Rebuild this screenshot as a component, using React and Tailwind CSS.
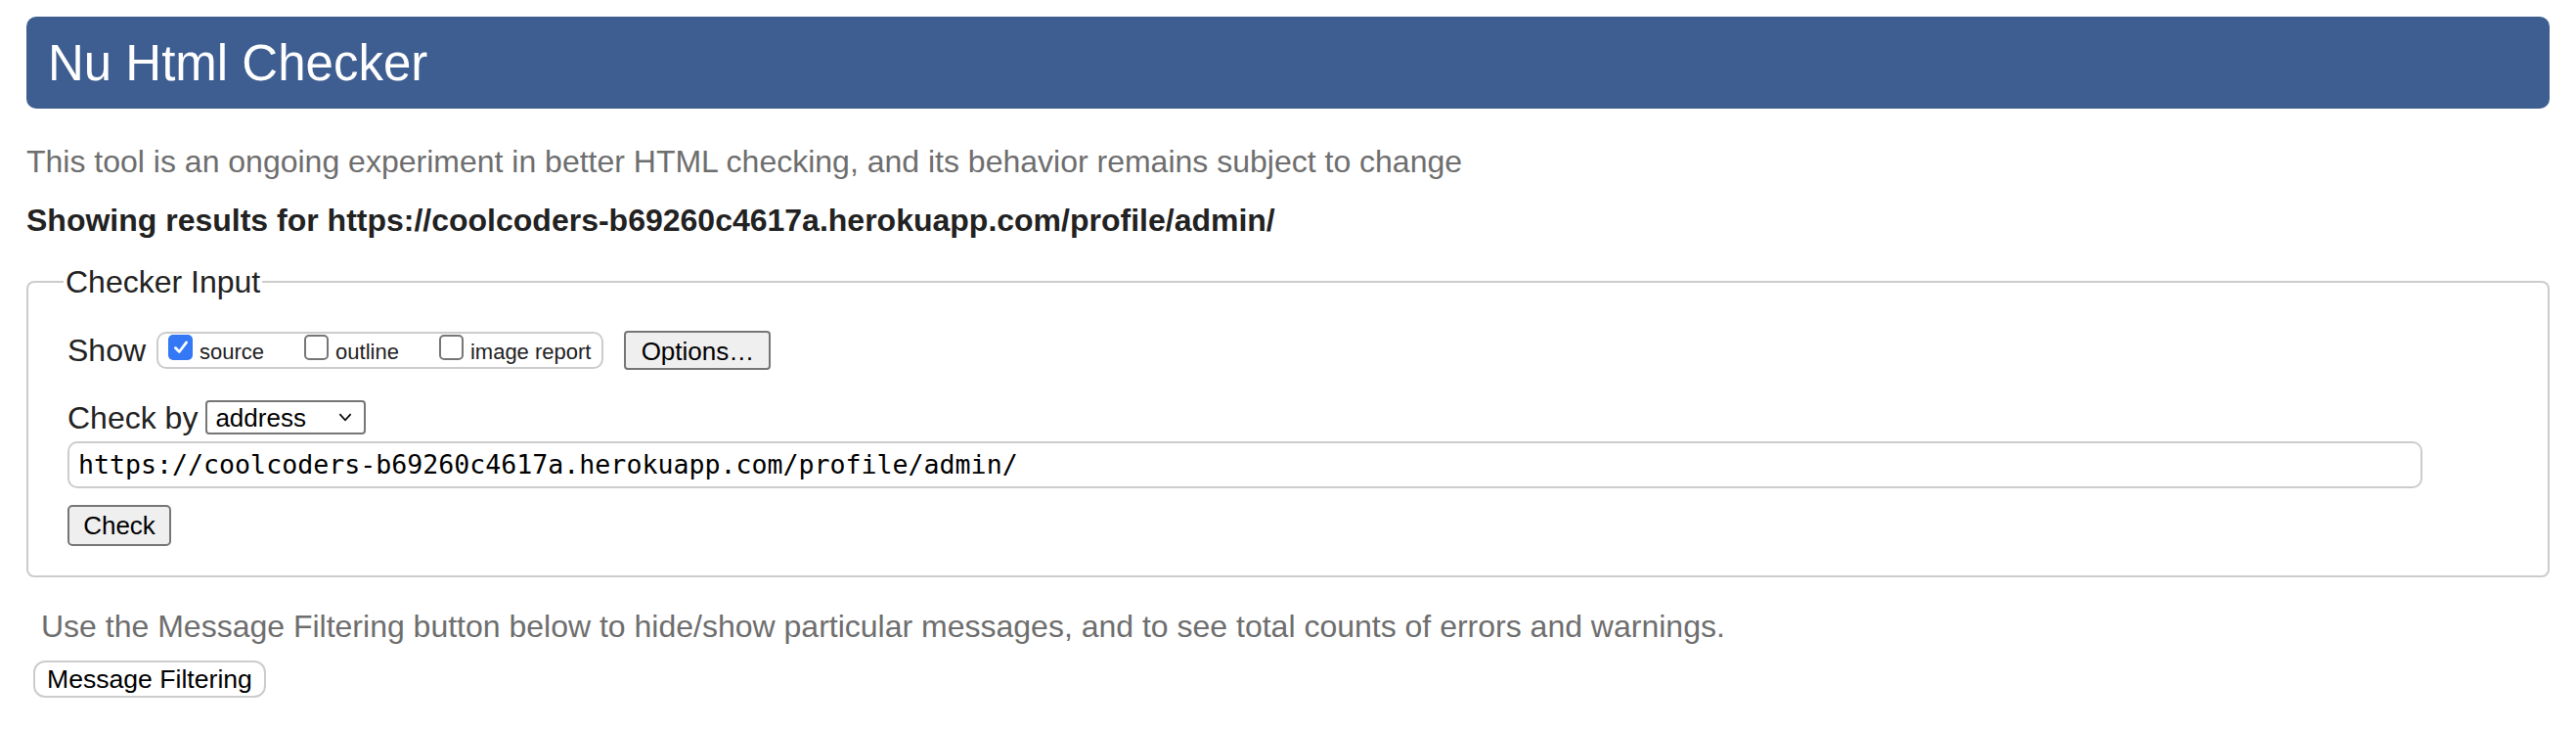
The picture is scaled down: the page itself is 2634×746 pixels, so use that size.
import React from "react";

const url = "https://coolcoders-b69260c4617a.herokuapp.com/profile/admin/";

function Box({ checked, label }) {
  return (
    <label className="flex items-end gap-[7px]">
      {checked ? (
        <span className="mb-[1px] flex h-[26px] w-[25px] items-center justify-center rounded-[5px] bg-[#3478f6]">
          <svg viewBox="0 0 16 16" className="h-[18px] w-[18px]">
            <path d="M3 8.5 L6.5 12 L13 3.5" fill="none" stroke="white" strokeWidth="2.4" strokeLinecap="round" strokeLinejoin="round" />
          </svg>
        </span>
      ) : (
        <span className="mb-[1px] h-[26px] w-[25px] rounded-[5px] border-2 border-[#767676] bg-white" />
      )}
      <span className="text-[22px] leading-[18px] text-[#222]">{label}</span>
    </label>
  );
}

export default function App() {
  return (
    <div className="min-h-screen bg-white px-[27px] pt-[17px] font-['Liberation_Sans',Arial,sans-serif] text-[#222]">
      {/* Title bar */}
      <header className="flex h-[94px] items-center rounded-[10px] bg-[#3e5e91] pl-[22px]">
        <h1 className="text-[51px] leading-none text-white">Nu Html Checker</h1>
      </header>

      <p className="mt-[36px] text-[32px] leading-[36px] text-[#6e6e6e]">
        This tool is an ongoing experiment in better HTML checking, and its behavior remains subject to change
      </p>
      <p className="mt-[24px] text-[32px] font-bold leading-[36px] text-[#222]">
        Showing results for {url}
      </p>

      {/* Checker input */}
      <fieldset className="mt-[27px] rounded-[8px] border-2 border-[#ccc] px-[40px]">
        <legend className="-ml-[4px] px-[2px] text-[32px] leading-[36px]">Checker Input</legend>
        <div className="flex flex-col pb-[30px] pt-[33px]">
          <div className="flex h-[38px] items-center">
            <span className="text-[32px] leading-none">Show</span>
            <div className="ml-[11px] flex h-[38px] items-end gap-[41px] rounded-[10px] border-2 border-[#ccc] pb-[6px] pl-[10px] pr-[11px]">
              <Box checked label="source" />
              <Box label="outline" />
              <Box label="image report" />
            </div>
            <button className="ml-[21px] h-[40px] w-[150px] rounded-[4px] border-2 border-[#767676] bg-[#efefef] text-[26px] text-black">
              Options…
            </button>
          </div>

          <div className="mt-[32px] flex h-[35px] items-center">
            <span className="text-[32px] leading-none">Check by</span>
            <div className="ml-[8px] flex h-[35px] w-[164px] items-center justify-between rounded-[4px] border-2 border-[#767676] bg-white pl-[8px] pr-[12px]">
              <span className="text-[26px] leading-none text-black">address</span>
              <svg viewBox="0 0 12 8" className="h-[9px] w-[14px]">
                <path d="M1 1 L6 6.5 L11 1" fill="none" stroke="black" strokeWidth="1.4" />
              </svg>
            </div>
          </div>

          <div className="mt-[7px] flex h-[48px] w-[2408px] items-center rounded-[10px] border-2 border-[#ccc] pl-[9px]">
            <span className="font-['DejaVu_Sans_Mono',monospace] text-[26.6px] leading-none text-black">{url}</span>
          </div>

          <div className="mt-[17px]">
            <button className="h-[42px] w-[106px] rounded-[5px] border-2 border-[#767676] bg-[#efefef] text-[26px] text-black">
              Check
            </button>
          </div>
        </div>
      </fieldset>

      <p className="ml-[15px] mt-[32px] text-[32px] leading-[36px] text-[#6e6e6e]">
        Use the Message Filtering button below to hide/show particular messages, and to see total counts of errors and warnings.
      </p>
      <button className="ml-[7px] mt-[17px] h-[38px] rounded-[12px] border-2 border-[#ccc] bg-white px-[12px] text-[26.6px] leading-none text-black">
        Message Filtering
      </button>
    </div>
  );
}
